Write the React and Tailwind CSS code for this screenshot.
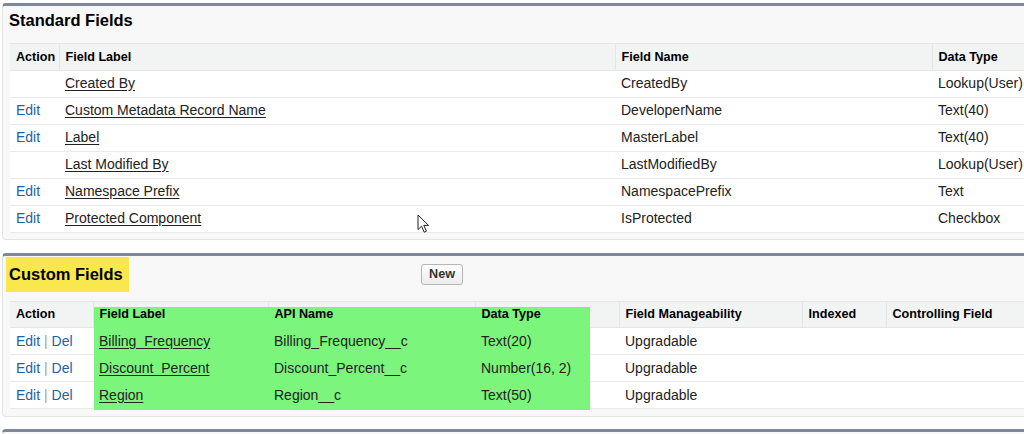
import React from "react";

const font = { fontFamily: '"Liberation Sans", Arial, sans-serif' };

const stdRows = [
  { edit: false, label: "Created By", name: "CreatedBy", type: "Lookup(User)" },
  { edit: true, label: "Custom Metadata Record Name", name: "DeveloperName", type: "Text(40)" },
  { edit: true, label: "Label", name: "MasterLabel", type: "Text(40)" },
  { edit: false, label: "Last Modified By", name: "LastModifiedBy", type: "Lookup(User)" },
  { edit: true, label: "Namespace Prefix", name: "NamespacePrefix", type: "Text" },
  { edit: true, label: "Protected Component", name: "IsProtected", type: "Checkbox" },
];

const customRows = [
  { label: "Billing_Frequency", api: "Billing_Frequency__c", type: "Text(20)" },
  { label: "Discount_Percent", api: "Discount_Percent__c", type: "Number(16, 2)" },
  { label: "Region", api: "Region__c", type: "Text(50)" },
];

function Th({ children, first }) {
  return (
    <th
      className={
        "h-[26px] px-[6px] text-left align-middle text-[12.6px] font-bold text-black " +
        (first ? "" : "border-l border-[#e3e5e7]")
      }
    >
      <span className="relative z-10">{children}</span>
    </th>
  );
}

function Td({ children, className = "", pb = "pb-[2px]" }) {
  return (
    <td className={"px-[6px] " + pb + " " + className}>
      <span className="relative z-10">{children}</span>
    </td>
  );
}

function Cursor() {
  return (
    <svg
      className="absolute left-[417px] top-[214px] z-20"
      width="14"
      height="20"
      viewBox="0 0 14 20"
    >
      <path
        d="M1 1 L1 15.5 L4.5 12.2 L7.2 18.2 L9.4 17.2 L6.8 11.4 L11.6 11.4 Z"
        fill="#fff"
        stroke="#222"
        strokeWidth="1"
        strokeLinejoin="round"
      />
    </svg>
  );
}

export default function App() {
  return (
    <div
      className="relative h-[434px] w-[1024px] overflow-hidden bg-white text-[14px] text-[#222]"
      style={font}
    >
      {/* Standard Fields */}
      <div className="ml-[2px] mt-[3px] w-[1060px] rounded-[4px] border-t-[3px] border-l border-b border-t-[#7f8798] border-l-[#e4e4e4] border-b-[#e4e4e4] bg-[#f8f8f8] pb-[6px]">
        <div className="h-[37px] px-[6px] pt-[4px] text-[16.5px] font-bold leading-[20px] text-black">
          Standard Fields
        </div>
        <table className="ml-[7px] table-fixed border-collapse bg-white" style={{ width: 1050 }}>
          <colgroup>
            <col className="w-[49px]" />
            <col className="w-[556px]" />
            <col className="w-[317px]" />
            <col />
          </colgroup>
          <thead>
            <tr className="h-[27px] border-t border-b border-[#e3e5e7] bg-[#f2f3f3]">
              <Th first>Action</Th>
              <Th>Field Label</Th>
              <Th>Field Name</Th>
              <Th>Data Type</Th>
            </tr>
          </thead>
          <tbody>
            {stdRows.map((r) => (
              <tr key={r.name} className="h-[27px] border-b border-[#e8eaec]">
                <Td className="text-[#1b63a8]">{r.edit ? "Edit" : ""}</Td>
                <Td>
                  <span className="underline underline-offset-[2px]">{r.label}</span>
                </Td>
                <Td>{r.name}</Td>
                <Td>{r.type}</Td>
              </tr>
            ))}
          </tbody>
        </table>
      </div>

      {/* Custom Fields */}
      <div className="relative ml-[2px] mt-[13px] w-[1060px] rounded-[4px] border-t-[3px] border-l border-b border-t-[#7f8798] border-l-[#e4e4e4] border-b-[#e4e4e4] bg-[#f8f8f8] pb-[7px]">
        <div className="relative h-[45px]">
          <div className="ml-[3px] mt-[1px] inline-flex h-[35px] items-center bg-[#f8e84e] pl-[3px] pr-[6px] text-[16.5px] font-bold text-black">
            Custom Fields
          </div>
          <button className="absolute left-[418px] top-[8px] h-[21px] w-[42px] rounded-[3px] border border-[#b5b5b5] bg-gradient-to-b from-[#ffffff] to-[#ececec] text-[12.6px] font-bold text-[#333]">
            New
          </button>
        </div>
        <div className="relative ml-[7px]">
          <table className="table-fixed border-collapse bg-white" style={{ width: 1050 }}>
            <colgroup>
              <col className="w-[83px]" />
              <col className="w-[175px]" />
              <col className="w-[207px]" />
              <col className="w-[144px]" />
              <col className="w-[183px]" />
              <col className="w-[84px]" />
              <col />
            </colgroup>
            <thead>
              <tr className="h-[26px] border-t border-b border-[#e3e5e7] bg-[#f2f3f3]">
                <Th first>Action</Th>
                <Th>Field Label</Th>
                <Th>API Name</Th>
                <Th>Data Type</Th>
                <Th>Field Manageability</Th>
                <Th>Indexed</Th>
                <Th>Controlling Field</Th>
              </tr>
            </thead>
            <tbody>
              {customRows.map((r) => (
                <tr key={r.api} className="h-[27px] border-b border-[#e8eaec]">
                  <Td pb="pb-0" className="text-[#1b63a8]">
                    Edit <span className="text-[#a0a0a0]">|</span> Del
                  </Td>
                  <Td pb="pb-0">
                    <span className="underline underline-offset-[2px]">{r.label}</span>
                  </Td>
                  <Td pb="pb-0">{r.api}</Td>
                  <Td pb="pb-0">{r.type}</Td>
                  <Td pb="pb-0">Upgradable</Td>
                  <Td pb="pb-0"></Td>
                  <Td pb="pb-0"></Td>
                </tr>
              ))}
            </tbody>
          </table>
          <div className="pointer-events-none absolute left-[84px] top-[6px] h-[103px] w-[496px] bg-[#74f474]/[0.95]" />
        </div>
      </div>

      {/* Next panel top */}
      <div className="ml-[2px] mt-[12px] h-[10px] w-[1060px] rounded-t-[4px] border-t-[3px] border-t-[#7f8798] bg-[#f8f8f8]" />

      <Cursor />
    </div>
  );
}
